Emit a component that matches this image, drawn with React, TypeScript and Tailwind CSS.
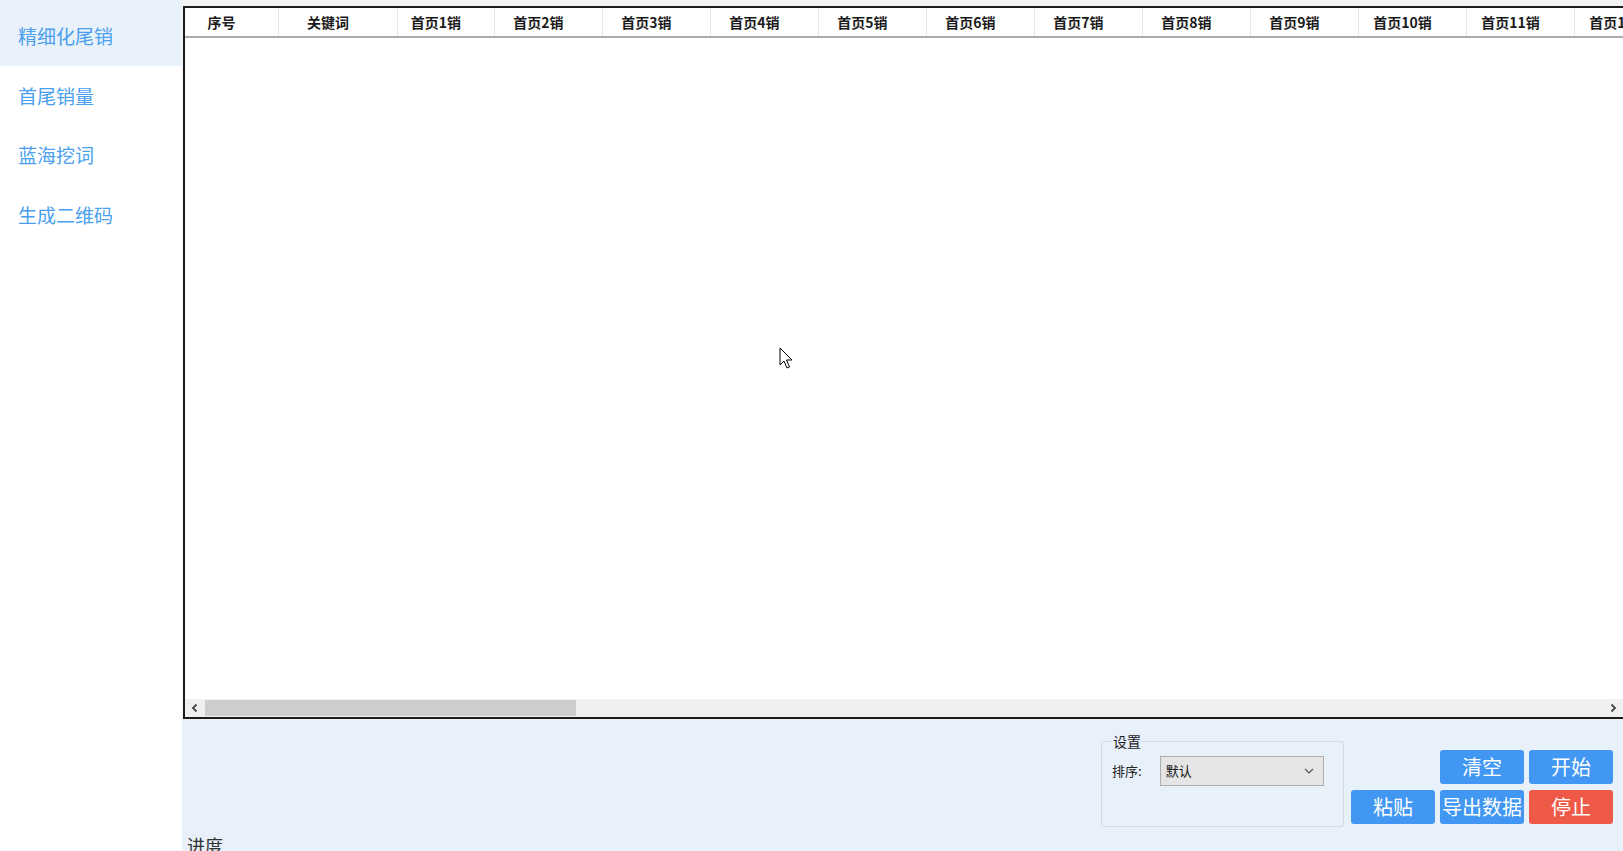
import React from "react";

const navItems = ["精细化尾销", "首尾销量", "蓝海挖词", "生成二维码"];

const columns: { label: string; w: number }[] = [
  { label: "序号", w: 94 },
  { label: "关键词", w: 119 },
  { label: "首页1销", w: 97 },
  ...Array.from({ length: 11 }, (_, i) => ({ label: `首页${i + 2}销`, w: 108 })),
];

export default function App() {
  return (
    <div
      className="relative flex w-[1623px] h-[851px] overflow-hidden bg-white"
      style={{ fontFamily: '"Noto Sans CJK SC", "Noto Sans", sans-serif' }}
    >
      {/* Sidebar */}
      <div className="flex flex-col w-[182px] shrink-0 bg-white">
        <div className="h-[6px] bg-[#e9f1fb]" />
        {navItems.map((t, i) => (
          <div
            key={t}
            className={`flex items-center h-[59.5px] pl-[18px] text-[19px] leading-none text-[#4a9fee] ${
              i === 0 ? "bg-[#e9f1fb]" : "bg-white"
            }`}
          >
            {t}
          </div>
        ))}
      </div>

      {/* Main */}
      <div className="flex flex-col flex-1 min-w-0 bg-[#f3f3f3]">
        <div className="h-[6px] shrink-0" />
        <div className="flex flex-col h-[713px] shrink-0 ml-px bg-white border-t-2 border-l-2 border-b-2 border-[#1c1c1c] overflow-hidden">
          {/* Header */}
          <div className="flex h-[30px] shrink-0 border-b-2 border-[#ababab] bg-white">
            {columns.map((c) => (
              <div
                key={c.label}
                className="flex items-center justify-center shrink-0 pr-5 border-r border-[#e6e6e6] text-[14px] font-bold text-[#1a1a1a] whitespace-nowrap"
                style={{ width: c.w }}
              >
                {c.label}
              </div>
            ))}
          </div>
          {/* Body */}
          <div className="flex-1 bg-white" />
          {/* Horizontal scrollbar */}
          <div className="flex items-center h-[18px] shrink-0 bg-[#f0f0f0]">
            <div className="flex items-center justify-center w-[20px] h-full">
              <svg width="8" height="10" viewBox="0 0 8 10">
                <path d="M5.5 1.5 L2 5 L5.5 8.5" fill="none" stroke="#444" strokeWidth="1.8" />
              </svg>
            </div>
            <div className="w-[371px] h-[16px] bg-[#cdcdcd]" />
            <div className="flex-1" />
            <div className="flex items-center justify-center w-[20px] h-full">
              <svg width="8" height="10" viewBox="0 0 8 10">
                <path d="M2.5 1.5 L6 5 L2.5 8.5" fill="none" stroke="#444" strokeWidth="1.8" />
              </svg>
            </div>
          </div>
        </div>

        {/* Bottom panel */}
        <div className="flex flex-col flex-1 min-h-0 bg-[#e8f0fa] pt-[13px]">
          <div className="flex justify-end items-start h-[95px] shrink-0 pr-[10px] gap-[7px]">
            <fieldset className="w-[243px] h-[95px] border border-[#d3dbe5] rounded-[2px] px-[10px]">
              <legend className="px-[1px] text-[14px] leading-[18px] text-[#1a1a1a]">设置</legend>
              <div className="flex items-center mt-[6px] gap-[18px]">
                <span className="text-[13px] text-[#222]">排序:</span>
                <div className="flex items-center justify-between w-[164px] h-[30px] bg-[#e5e5e5] border border-[#adadad] pl-[5px] pr-[9px]">
                  <span className="text-[13px] text-[#111]">默认</span>
                  <svg width="10" height="6" viewBox="0 0 10 6">
                    <path d="M1 1 L5 5 L9 1" fill="none" stroke="#555" strokeWidth="1.2" />
                  </svg>
                </div>
              </div>
            </fieldset>
            <div className="grid grid-cols-[84px_84px_84px] gap-x-[5px] gap-y-[6px] mt-[18px]">
              <div />
              <button className="h-[34px] rounded-[3px] bg-[#4197f2] text-white text-[20px] leading-none">清空</button>
              <button className="h-[34px] rounded-[3px] bg-[#4197f2] text-white text-[20px] leading-none">开始</button>
              <button className="h-[34px] rounded-[3px] bg-[#4197f2] text-white text-[20px] leading-none">粘贴</button>
              <button className="h-[34px] rounded-[3px] bg-[#4197f2] text-white text-[20px] leading-none">导出数据</button>
              <button className="h-[34px] rounded-[3px] bg-[#ee5948] text-white text-[20px] leading-none">停止</button>
            </div>
          </div>
          <div className="mt-[6px] ml-[5px] text-[18px] leading-[24px] text-[#333] shrink-0">进度</div>
        </div>
      </div>

      {/* Mouse cursor */}
      <svg
        className="absolute left-[779px] top-[347px]"
        width="16"
        height="24"
        viewBox="0 0 16 24"
      >
        <path
          d="M1 1 L1 18 L5 14 L8 21 L10.5 20 L7.5 13 L13 13 Z"
          fill="#fff"
          stroke="#000"
          strokeWidth="1"
          strokeLinejoin="round"
        />
      </svg>
    </div>
  );
}
